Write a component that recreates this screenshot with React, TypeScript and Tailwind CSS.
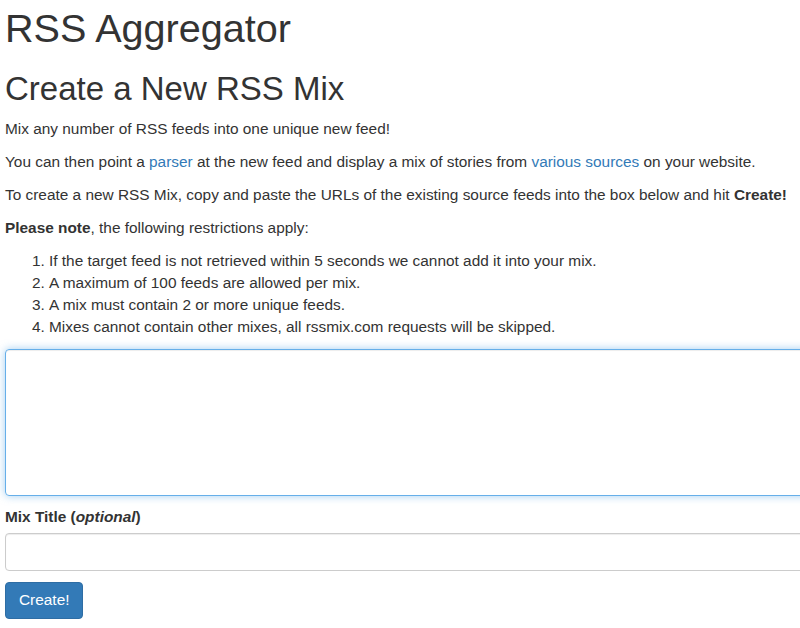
export default function App() {
  return (
    <div className="w-full overflow-hidden bg-white">
      <div className="pl-[5px] pt-[7px] font-['Liberation_Sans',Arial,sans-serif] text-[15.4px] leading-[22px] text-[#333]">
        <h1 className="mb-[20px] text-[39.6px] leading-[1.1] font-normal">RSS Aggregator</h1>
        <h2 className="mb-[11px] text-[33px] leading-[1.1] font-normal">Create a New RSS Mix</h2>
        <p className="mb-[11px]">Mix any number of RSS feeds into one unique new feed!</p>
        <p className="mb-[11px]">
          You can then point a <a href="#" className="text-[#337ab7]">parser</a> at the new feed and display a mix of
          stories from <a href="#" className="text-[#337ab7]">various sources</a> on your website.
        </p>
        <p className="mb-[11px]">
          To create a new RSS Mix, copy and paste the URLs of the existing source feeds into the box below and hit{" "}
          <b>Create!</b>
        </p>
        <p className="mb-[11px]">
          <b>Please note</b>, the following restrictions apply:
        </p>
        <ol className="mb-[11px] list-decimal pl-[44px]">
          <li>If the target feed is not retrieved within 5 seconds we cannot add it into your mix.</li>
          <li>A maximum of 100 feeds are allowed per mix.</li>
          <li>A mix must contain 2 or more unique feeds.</li>
          <li>Mixes cannot contain other mixes, all rssmix.com requests will be skipped.</li>
        </ol>
        <form onSubmit={(e) => e.preventDefault()}>
          <textarea
            rows={6}
            className="block h-[147px] w-[900px] resize-none rounded-[4px] border border-[#66afe9] px-[13px] py-[6.6px] shadow-[inset_0_1px_1px_rgba(0,0,0,0.075),0_0_8px_rgba(102,175,233,0.6)] outline-none"
          />
          <label className="mt-[10px] mb-[5.5px] block font-bold">
            Mix Title (<i>optional</i>)
          </label>
          <input
            type="text"
            className="block h-[37.4px] w-[900px] rounded-[4px] border border-[#ccc] px-[13px] shadow-[inset_0_1px_1px_rgba(0,0,0,0.075)] outline-none"
          />
          <button
            type="submit"
            className="mt-[11px] h-[37px] rounded-[4px] border border-[#2e6da4] bg-[#337ab7] px-[13px] text-[15.4px] text-white"
          >
            Create!
          </button>
        </form>
      </div>
    </div>
  )
}
